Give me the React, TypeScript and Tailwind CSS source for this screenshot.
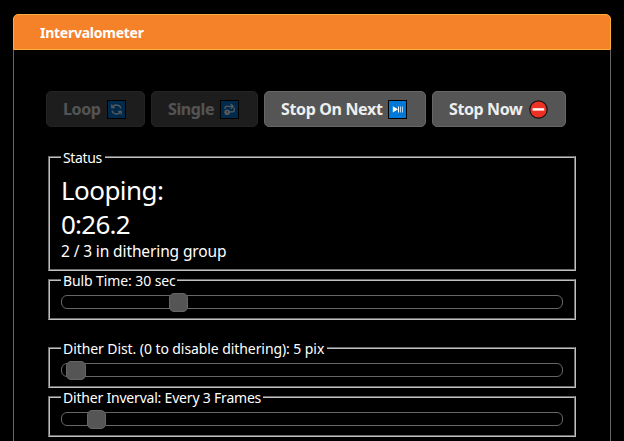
import type { ReactNode } from "react";

function LoopIcon() {
  return (
    <svg width="19" height="19" viewBox="0 0 19 19" className="shrink-0">
      <rect width="19" height="19" fill="#000" />
      <rect x="1" y="1" width="17" height="17" fill="#0078d7" />
      <g fill="none" stroke="#fff" strokeWidth="1.3">
        <path d="M5.3 7.6A4.7 4.7 0 0 1 14 8.4M13.7 11.4A4.7 4.7 0 0 1 5 10.6" />
        <path d="M4.8 4.6V7.7H7.8M14.2 14.4V11.3H11.2" />
      </g>
    </svg>
  );
}

function SingleIcon() {
  return (
    <svg width="19" height="19" viewBox="0 0 19 19" className="shrink-0">
      <rect width="19" height="19" fill="#000" />
      <rect x="1" y="1" width="17" height="17" fill="#0078d7" />
      <g fill="none" stroke="#fff" strokeWidth="1.3">
        <path d="M5 9V8Q5 6.4 6.6 6.4H13M10.8 4L13.2 6.4L10.8 8.8" />
        <path d="M14.2 7.6V10.4Q14.2 11.8 12.6 11.8H9.6" />
      </g>
      <circle cx="7.2" cy="12.2" r="2.8" fill="#fff" />
      <path d="M6.6 11.4L7.4 11V13.6" fill="none" stroke="#0078d7" strokeWidth=".6" />
    </svg>
  );
}

function PlayPauseIcon() {
  return (
    <svg width="19" height="19" viewBox="0 0 19 19" className="shrink-0">
      <rect width="19" height="19" fill="#000" />
      <rect x="1" y="1" width="17" height="17" fill="#0078d7" />
      <path d="M4.8 6.3L10 9.3L4.8 12.5ZM10 6.5h1v6h-1Z" fill="#fff" />
      <path d="M12 6.5h1v6h-1ZM14 6.5h1v6h-1Z" fill="#b5d9f5" />
    </svg>
  );
}

function NoEntryIcon() {
  return (
    <svg width="19" height="19" viewBox="0 0 19 19" className="shrink-0">
      <circle cx="9.5" cy="9.5" r="8.7" fill="#ee3124" stroke="#111" strokeWidth="1.2" />
      <rect x="3.6" y="8.2" width="11.6" height="2.4" fill="#fff" />
    </svg>
  );
}

function Button({ label, icon, width, tracking, disabled = false }: { label: string; icon: ReactNode; width: string; tracking: string; disabled?: boolean }) {
  return (
    <button
      disabled={disabled}
      className={`flex h-9 ${width} items-center justify-between rounded-[5px] border border-[#666] bg-[#555] pl-4 text-[16px] font-bold text-[#eee] ${disabled ? "opacity-35" : ""}`}
    >
      <span className={`whitespace-nowrap ${tracking}`}>{label}</span>
      {icon}
    </button>
  );
}

function Group({ title, width, tracking, className, children }: { title: string; width: string; tracking: string; className: string; children: ReactNode }) {
  return (
    <fieldset className={`w-[528px] border-2 border-[#c0c0c0] px-[11px] [border-style:groove] ${className}`}>
      <legend className={`h-[18px] ${width} whitespace-nowrap pl-0.5 text-[14px] leading-[20px] ${tracking}`}>{title}</legend>
      {children}
    </fieldset>
  );
}

function Slider({ offset }: { offset: string }) {
  return (
    <div className="mt-1.5 flex h-3.5 items-center rounded-[6px] border border-[#666]">
      <div className={`h-[19px] shrink-0 rounded-[5px] border border-[#666] bg-[#555] ${offset}`} />
    </div>
  );
}

export default function App() {
  return (
    <div className="h-[441px] overflow-hidden bg-black pl-[13px] pt-3.5 font-['Noto_Sans',sans-serif] text-white">
      <div className="h-[460px] w-[598px]">
        <header className="flex h-9 items-center rounded-t-[5px] border border-[#ffaf3a] bg-[#f58228] pl-[26px] text-[14px] font-bold">
          <h1 className="tracking-[-0.25px]">Intervalometer</h1>
        </header>
        <main className="h-[424px] border-x border-[#666] pl-8 pt-[41px]">
          <div className="flex gap-1.5">
            <Button label="Loop" icon={<LoopIcon />} width="w-[99px] pr-[18px]" tracking="tracking-[-0.4px]" disabled />
            <Button label="Single" icon={<SingleIcon />} width="w-[107px] pr-[18px]" tracking="tracking-[-0.4px]" disabled />
            <Button label="Stop On Next" icon={<PlayPauseIcon />} width="w-[162px] pr-[18px]" tracking="tracking-[-0.35px]" />
            <Button label="Stop Now" icon={<NoEntryIcon />} width="w-[134px] pr-[17px]" tracking="tracking-[-0.4px]" />
          </div>
          <div className="ml-0.5 mt-[21px]">
            <Group title="Status" width="w-11" tracking="tracking-[-0.35px]" className="h-[123px]">
              <div className="pt-[7px] text-[26px] leading-[34px]">
                <div className="tracking-[-0.55px]">Looping:</div>
                <div className="tracking-[-0.75px]">0:26.2</div>
              </div>
              <div className="text-[15.5px] leading-[20px] tracking-[-0.12px]">2 / 3 in dithering group</div>
            </Group>
            <Group title="Bulb Time: 30 sec" width="w-[116px]" tracking="tracking-[-0.1px]" className="h-[49px]">
              <Slider offset="ml-[107px] w-[19px]" />
            </Group>
            <Group title="Dither Dist. (0 to disable dithering): 5 pix" width="w-[266px]" tracking="tracking-[-0.08px]" className="mt-[19px] h-[49px]">
              <Slider offset="ml-1 w-5" />
            </Group>
            <Group title="Dither Inverval: Every 3 Frames" width="w-[202px]" tracking="tracking-[-0.2px]" className="h-[49px]">
              <Slider offset="ml-[25px] w-[19px]" />
            </Group>
          </div>
        </main>
      </div>
    </div>
  );
}
